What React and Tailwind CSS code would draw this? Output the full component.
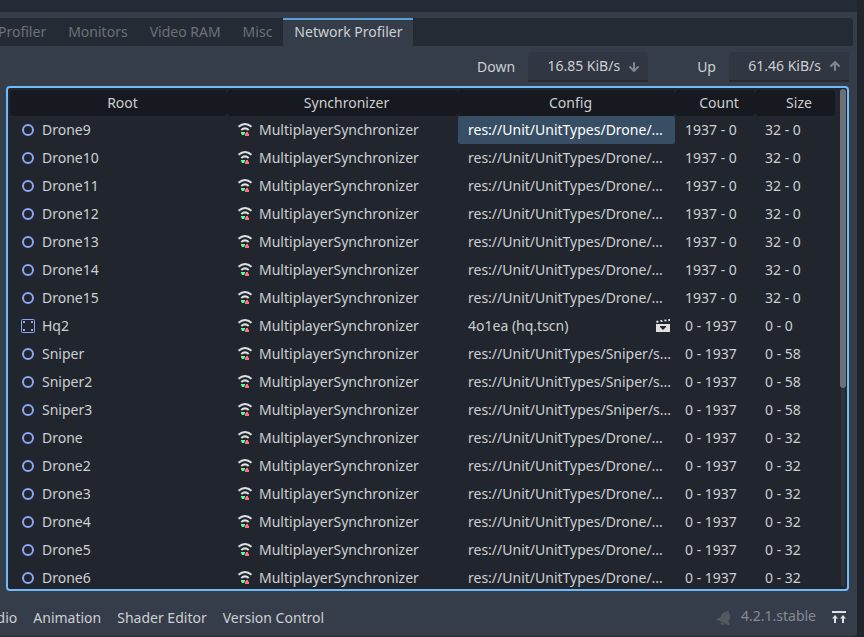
import React from 'react';

const DRONE = 'res://Unit/UnitTypes/Drone/...';
const SNIPER = 'res://Unit/UnitTypes/Sniper/s...';

const rows = [
  ...['Drone9', 'Drone10', 'Drone11', 'Drone12', 'Drone13', 'Drone14', 'Drone15'].map((name) => ({
    name, config: DRONE, count: '1937 - 0', size: '32 - 0',
  })),
  { name: 'Hq2', config: '4o1ea (hq.tscn)', count: '0 - 1937', size: '0 - 0', control: true },
  ...['Sniper', 'Sniper2', 'Sniper3'].map((name) => ({
    name, config: SNIPER, count: '0 - 1937', size: '0 - 58',
  })),
  ...['Drone', 'Drone2', 'Drone3', 'Drone4', 'Drone5', 'Drone6'].map((name) => ({
    name, config: DRONE, count: '0 - 1937', size: '0 - 32',
  })),
];

const tabs = ['Profiler', 'Monitors', 'Video RAM', 'Misc', 'Network Profiler'];
const columns = ['Root', 'Synchronizer', 'Config', 'Count', 'Size'];
const panels = ['Audio', 'Animation', 'Shader Editor', 'Version Control'];

function NodeIcon() {
  return (
    <svg viewBox="0 0 16 16" className="size-4 shrink-0" aria-hidden="true">
      <circle cx="8" cy="8" r="5" fill="none" stroke="#8da5f3" strokeWidth="2" />
    </svg>
  );
}

function ControlIcon() {
  return (
    <svg viewBox="0 0 16 16" className="size-4 shrink-0" aria-hidden="true">
      <rect x="1.5" y="1.5" width="13" height="13" rx="1" fill="none" stroke="#8da5f3" />
      <path d="M3 3h2v2H3zM11 3h2v2h-2zM3 11h2v2H3zM11 11h2v2h-2z" fill="#8da5f3" />
    </svg>
  );
}

function SyncIcon() {
  return (
    <svg viewBox="0 0 16 16" className="size-4 shrink-0" aria-hidden="true">
      <path d="M1.5 4.800Q8-.8 14.5 4.800M4.300 8Q8 4.800 11.700 8" fill="none" stroke="#e0e0e0" strokeWidth="2" />
      <path d="M4 10h4v1l-1 2H5l-1-2z" fill="#5fff97" />
      <path d="M9 10h2v1l1 1v2H8v-2l1-1z" fill="#ff7085" />
    </svg>
  );
}

function SceneIcon() {
  return (
    <svg viewBox="0 0 16 16" className="size-4 shrink-0" aria-hidden="true">
      <path d="M1 3l2-.5.8 1.800-2 .6zM5 2.300l2-.4.8 1.800-2 .4zM9 1.800l2-.4.8 1.800-2 .4zM13 1.300l2-.3V3l-1.500.3z" fill="#e0e0e0" />
      <path fillRule="evenodd" d="M1 6h14v8H1zM5 8v1l2 2v.5h2V11l2-2V8z" fill="#e0e0e0" />
    </svg>
  );
}

function ArrowIcon({ up }) {
  return (
    <svg viewBox="0 0 16 16" className="size-4 shrink-0" aria-hidden="true">
      <path
        d={up ? 'M8 12V4M4 8l4-4 4 4' : 'M8 5v8M4 9l4 4 4-4'}
        fill="none" stroke="#83868c" strokeWidth="2" strokeLinejoin="round" strokeLinecap="round"
      />
    </svg>
  );
}

function BellIcon() {
  return (
    <svg viewBox="0 0 16 16" className="size-4 shrink-0" aria-hidden="true">
      <g transform="rotate(25 8 8)" fill="#535961">
        <path d="M8 .5a1.500 1.500 0 0 0-1.500 1.500A4.500 4.500 0 0 0 3.500 6.500v3L1 11.500V13h14v-1.500l-2.500-2v-3a4.500 4.500 0 0 0-3-4.500A1.500 1.500 0 0 0 8 .5z" />
        <path d="M6 13.500h4a2 2 0 0 1-4 0z" />
      </g>
    </svg>
  );
}

function ExpandIcon() {
  return (
    <svg viewBox="0 0 16 16" className="size-4 shrink-0" aria-hidden="true">
      <path d="M1 1h14v2H1zM4 5L7 8.500H5V13H3V8.500H1zM12 5l3 3.500h-2V13h-2V8.500H9z" fill="#e0e0e0" />
    </svg>
  );
}

function Rate({ id, label, value, up }) {
  return (
    <div className="flex items-start gap-[13px]">
      <label htmlFor={id} className="pt-[5px]">{label}</label>
      <button
        id={id}
        type="button"
        className="flex h-[30px] w-[120px] items-center justify-end gap-1.5 rounded-t-sm border-b-2 border-[#262c36] bg-[#303642] pr-1.5"
      >
        {value}
        <ArrowIcon up={up} />
      </button>
    </div>
  );
}

export default function App() {
  return (
    <div className="flex h-screen flex-col overflow-hidden bg-[#20252d] pr-[7px] font-['Noto_Sans',sans-serif] text-sm leading-5 text-[#cdcfd2]">
      <div className="h-3 shrink-0 bg-[#252b34]" />
      <main className="flex min-h-0 flex-1 flex-col rounded-br-sm border-b border-[#262c36] bg-[#363d4a] pt-1.5">
        <div role="tablist" className="mr-1 flex h-7 shrink-0 overflow-hidden rounded-tr-sm bg-[#252b34]">
          {tabs.map((tab, i) => (
            <button
              key={tab}
              type="button"
              role="tab"
              aria-selected={i === 4}
              className={
                'shrink-0 whitespace-nowrap border-t-2 px-[11px] pb-0.5 first:-ml-[13px] ' +
                (i === 4 ? 'border-[#5c9fd6] bg-[#363d4a]' : 'border-transparent text-[#6c7177]')
              }
            >
              {tab}
            </button>
          ))}
        </div>

        <div className="mr-2 flex h-10 shrink-0 justify-end gap-[49px] pt-1.5">
          <Rate id="down" label="Down" value="16.85 KiB/s" />
          <Rate id="up" label="Up" value="61.46 KiB/s" up />
        </div>

        <section className="ml-1.5 mr-2 flex min-h-0 flex-1 overflow-hidden rounded-sm border-2 border-[#70bafa] bg-[#21262e]">
          <div className="min-w-0 flex-1 overflow-hidden pl-0.5 pt-0.5">
            <table className="w-full table-fixed border-separate border-spacing-0">
              <colgroup>
                <col />
                <col className="w-[231px]" />
                <col className="w-[217px]" />
                <col className="w-20" />
                <col className="w-20" />
              </colgroup>
              <thead>
                <tr className="h-[26px]">
                  {columns.map((column) => (
                    <th key={column} scope="col" className="rounded-sm bg-[#16191f] p-0 pl-2 font-normal">
                      {column}
                    </th>
                  ))}
                </tr>
              </thead>
              <tbody>
                {rows.map((row, i) => (
                  <tr key={row.name} className="h-7">
                    <td className="p-0 pl-2.5">
                      <div className="flex items-center gap-1.5">
                        {row.control ? <ControlIcon /> : <NodeIcon />}
                        {row.name}
                      </div>
                    </td>
                    <td className="p-0 pl-2.5">
                      <div className="flex items-center gap-1.5">
                        <SyncIcon />
                        MultiplayerSynchronizer
                      </div>
                    </td>
                    <td className={'whitespace-nowrap p-0 pl-2.5 ' + (i === 0 ? 'rounded-xs bg-[#374e65] text-white' : '')}>
                      <div className="flex items-center justify-between pr-1">
                        {row.config}
                        {row.control && <SceneIcon />}
                      </div>
                    </td>
                    <td className="p-0 pl-2.5">{row.count}</td>
                    <td className="p-0 pl-2.5">{row.size}</td>
                  </tr>
                ))}
              </tbody>
            </table>
          </div>
          <div className="flex w-3 shrink-0 flex-col items-center pb-0.5 pl-1 pt-px" aria-hidden="true">
            <div className="h-3/5 w-1.5 shrink-0 rounded-full bg-[#6d7076]" />
            <div className="w-1 flex-1 rounded-b-sm bg-[#2f333b]" />
          </div>
        </section>

        <footer className="flex h-[45px] shrink-0 items-center overflow-hidden pt-2">
          <nav className="-ml-[21px] flex gap-4">
            {panels.map((panel) => (
              <button key={panel} type="button" className="whitespace-nowrap">{panel}</button>
            ))}
          </nav>
          <div className="ml-auto flex items-center pr-2.5">
            <button type="button" aria-label="Notifications"><BellIcon /></button>
            <a href="#version" className="ml-2 pb-1 text-[#858a92]">4.2.1.stable</a>
            <button type="button" aria-label="Expand Bottom Panel" className="ml-[15px]"><ExpandIcon /></button>
          </div>
        </footer>
      </main>
    </div>
  );
}
